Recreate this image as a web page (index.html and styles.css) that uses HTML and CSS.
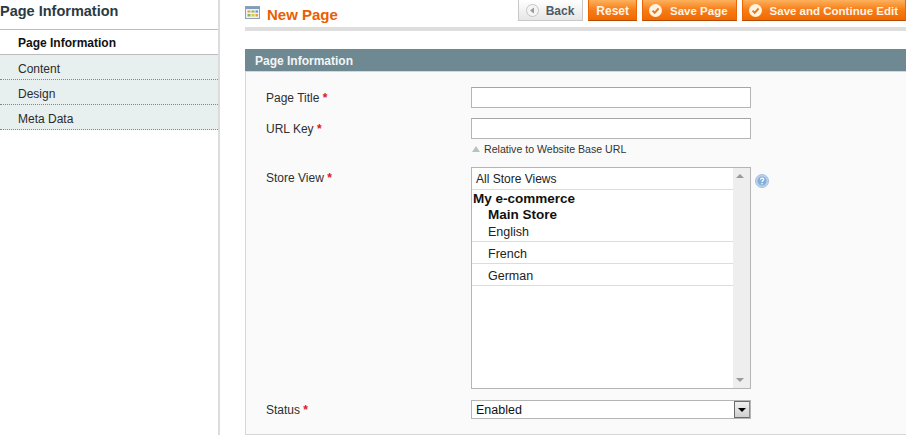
FILE: index.html
```html
<!DOCTYPE html>
<html lang="en">
<head>
<meta charset="utf-8">
<title>New Page</title>
<link rel="stylesheet" href="styles.css">
</head>
<body>
<div class="page">
  <aside class="side">
    <h3 class="side-title">Page Information</h3>
    <ul class="tabs">
      <li class="tab active">Page Information</li>
      <li class="tab">Content</li>
      <li class="tab">Design</li>
      <li class="tab">Meta Data</li>
    </ul>
  </aside>
  <main class="main">
    <div class="head">
      <div class="head-title">
        <svg class="head-icon" width="15" height="13" viewBox="0 0 15 13"><rect x=".5" y=".5" width="14" height="12" fill="#eef2f6" stroke="#8fa3b8"/><rect x="1" y="1" width="13" height="2" fill="#7f9cc0"/><rect x="2.500" y="4.500" width="3" height="2" fill="#e9a23b"/><rect x="6.500" y="4.500" width="3" height="2" fill="#8cb85c"/><rect x="10.500" y="4.500" width="2.500" height="2" fill="#5c8fc8"/><rect x="2.500" y="8" width="3" height="2.500" fill="#8cb85c"/><rect x="6.500" y="8" width="3" height="2.500" fill="#e9c53b"/><rect x="10.500" y="8" width="2.500" height="2.500" fill="#e9a23b"/></svg>
        <h3 class="title">New Page</h3>
      </div>
      <div class="actions">
        <button class="btn back"><svg class="ico" width="13" height="13" viewBox="0 0 13 13"><circle cx="6.500" cy="6.500" r="6" fill="#f4f4f4" stroke="#c4c4c4"/><path d="M8 3.500v6L4 6.500z" fill="#9a9a9a"/></svg>Back</button>
        <button class="btn reset">Reset</button>
        <button class="btn save short"><svg class="ico" width="13" height="13" viewBox="0 0 13 13"><circle cx="6.500" cy="6.500" r="6.500" fill="#fff3e2"/><path d="M3.600 6.600l2.100 2.200 3.900-4.300" fill="none" stroke="#e8791e" stroke-width="1.900"/></svg>Save Page</button>
        <button class="btn save"><svg class="ico" width="13" height="13" viewBox="0 0 13 13"><circle cx="6.500" cy="6.500" r="6.500" fill="#fff3e2"/><path d="M3.600 6.600l2.100 2.200 3.900-4.300" fill="none" stroke="#e8791e" stroke-width="1.900"/></svg>Save and Continue Edit</button>
      </div>
    </div>
    <h4 class="section">Page Information</h4>
    <form class="panel">
      <div class="row">
        <label class="label">Page Title <span class="req">*</span></label>
        <div class="field"><div class="input"></div></div>
      </div>
      <div class="row">
        <label class="label">URL Key <span class="req">*</span></label>
        <div class="field">
          <div class="input"></div>
          <p class="note">Relative to Website Base URL</p>
        </div>
      </div>
      <div class="row">
        <label class="label">Store View <span class="req">*</span></label>
        <div class="field list">
          <div class="list-body">
            <div class="opt">All Store Views</div>
            <div class="group">My e-commerce</div>
            <div class="group sub">Main Store</div>
            <div class="opt store top">English</div>
            <div class="opt store">French</div>
            <div class="opt store">German</div>
          </div>
          <div class="scroll"><span class="arrow up"></span><span class="arrow down"></span></div>
        </div>
        <svg class="help" width="14" height="14" viewBox="0 0 14 14"><circle cx="7" cy="7" r="6.500" fill="#bcd2ea" stroke="#a5c0e0"/><circle cx="7" cy="7" r="4.500" fill="#85aedb"/><path d="M5.400 5.600c.2-1.900 3.300-1.900 3.300 0 0 1.300-1.700 1.200-1.700 2.500" fill="none" stroke="#fff" stroke-width="1.200"/><rect x="6.400" y="9" width="1.300" height="1.300" fill="#fff"/></svg>
      </div>
      <div class="row last">
        <label class="label">Status <span class="req">*</span></label>
        <div class="field select"><span class="select-val">Enabled</span><span class="select-btn"><span class="caret"></span></span></div>
      </div>
    </form>
  </main>
</div>
</body>
</html>
```
FILE: styles.css
```css
html, body { margin: 0; padding: 0; background: #fff; height: 435px; overflow: hidden; }
body { font: 12px/15px "Liberation Sans", Arial, sans-serif; color: #2f2f2f; }
.page { display: flex; height: 435px; }

.side { width: 218px; flex: none; border-right: 2px solid #dcdcdc; }
.side-title { margin: 0; height: 29px; font-size: 14.500px; line-height: 23px; font-weight: bold; color: #2b3a42; border-bottom: 1px solid #bcbcbc; }
.tabs { list-style: none; margin: 0; padding: 0; }
.tab { height: 24px; line-height: 28px; padding-left: 18px; background: #e7efef; color: #2b2b2b; border-bottom: 1px dotted #7d8a8a; }
.tab.active { height: 24px; line-height: 26px; background: #fff; font-weight: bold; color: #111; border-bottom: 1px solid #bcbcbc; }

.main { flex: 1; min-width: 0; padding-left: 25px; }
.head { display: flex; justify-content: space-between; height: 27px; border-bottom: 4px solid #dedede; margin-bottom: 18px; }
.head-title { display: flex; align-items: flex-start; gap: 7px; padding-top: 6px; }
.head-icon { display: block; }
.title { margin: 0; font-size: 15px; line-height: 17px; font-weight: bold; color: #eb5e00; }
.actions { display: flex; gap: 5px; height: 21px; }
.btn { display: flex; align-items: center; height: 21px; padding: 1px 7px 0; border: 1px solid #ed6502; border-bottom-color: #b44b00; border-top: 0; background: linear-gradient(#fdb15c, #f77c16 50%, #f06a00); color: #fff5e8; font: bold 12px/18px "Liberation Sans", Arial, sans-serif; white-space: nowrap; }
.btn.back { background: linear-gradient(#fff, #e6e6e6); border: 1px solid #c8c8c8; border-top: 0; color: #4e5a66; padding-right: 8px; }
.btn.back .ico { margin: 0 7px 0 0; }
.btn.save { padding: 1px 7px 0 6px; font-size: 11.500px; }
.btn.save.short { padding-right: 8px; }
.ico { flex: none; margin-right: 8px; }

.section { margin: 0; height: 22px; padding-left: 10px; background: #6f8992; color: #f2f5f6; font-size: 12px; line-height: 24px; font-weight: bold; }
.panel { height: 364px; box-sizing: border-box; background: #fafafa; border: 1px solid #d6d6d6; border-right: 0; padding: 15px 0 0 20px; }
.row { display: flex; align-items: flex-start; margin-bottom: 10px; }
.row.last { margin: 11px 0 0; }
.label { width: 205px; flex: none; padding-top: 4px; color: #2f2f2f; }
.row.last .label { padding-top: 3px; }
.req { color: #e0142a; font-weight: bold; }
.field { width: 280px; flex: none; box-sizing: border-box; }
.input { height: 21px; box-sizing: border-box; background: #fff; border: 1px solid #b5b5b5; border-top-color: #a5a5a5; }
.note { position: relative; margin: 1px 0 0; height: 17px; font-size: 10.600px; line-height: 18px; padding-left: 13px; color: #333; }
.note::before { content: ""; position: absolute; left: 1px; top: 6px; border: 4px solid transparent; border-top: 0; border-bottom: 6px solid #b5c3c3; }

.list { display: flex; height: 222px; background: #fff; border: 1px solid #b5b5b5; }
.list-body { flex: 1; min-width: 0; color: #222; }
.opt { height: 21px; line-height: 22px; padding-left: 4px; border-bottom: 1px solid #dcdcdc; }
.opt.store { padding-left: 16px; font-size: 12.500px; line-height: 24px; }
.opt.store.top { height: 20px; line-height: 23px; }
.group { height: 15px; line-height: 18px; padding-left: 1px; font-weight: bold; color: #111; font-size: 13.500px; }
.group.sub { padding-left: 16px; height: 16px; line-height: 19px; }
.scroll { position: relative; width: 17px; flex: none; background: #eeeeee; }
.arrow { position: absolute; left: 3px; border: 4px solid transparent; }
.arrow.up { top: 6px; border-top: 0; border-bottom: 4px solid #9a9a9a; }
.arrow.down { bottom: 6px; border-bottom: 0; border-top: 4px solid #9a9a9a; }
.help { margin: 7px 0 0 4px; }

.select { display: flex; justify-content: space-between; height: 19px; background: #fff; border: 1px solid #b5b5b5; }
.select-val { padding-left: 4px; line-height: 18px; color: #111; font-size: 12.500px; }
.select-btn { display: flex; align-items: center; justify-content: center; width: 16px; box-sizing: border-box; background: linear-gradient(#f0f0f0, #cfcfcf); border: 1px solid #6b6b6b; border-right-color: #8a8a8a; }
.caret { border: 4px solid transparent; border-bottom: 0; border-top: 4px solid #000; }
```
